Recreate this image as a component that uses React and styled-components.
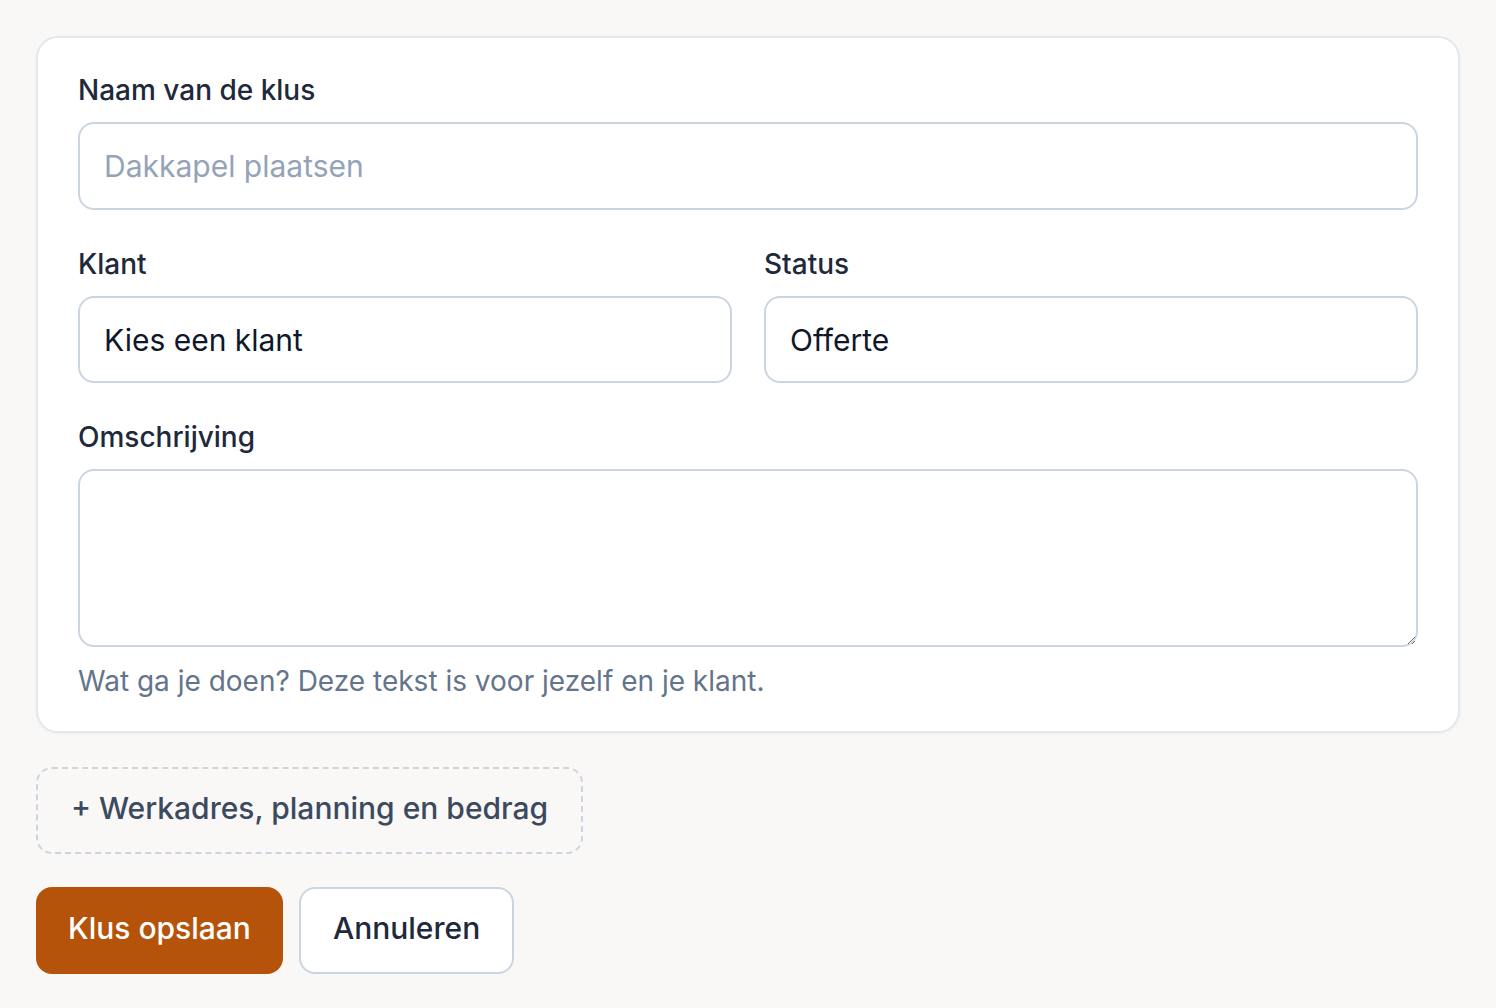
import React from "react";
import styled, { createGlobalStyle } from "styled-components";

const colors = {
  page: "#faf8f6",
  card: "#ffffff",
  cardBorder: "#e2e8f0",
  field: "#cbd5e1",
  label: "#1e293b",
  text: "#0f172a",
  placeholder: "#94a3b8",
  hint: "#64748b",
  muted: "#3b4a5f",
  primary: "#b45309",
};

const GlobalStyle = createGlobalStyle`
  * { box-sizing: border-box; }
  body {
    margin: 0;
    background: ${colors.page};
    font-family: "Inter", "Noto Sans", sans-serif;
  }
`;

export default function App() {
  return (
    <>
      <GlobalStyle />
      <Page>
        <Card>
          <Field>
            <Label htmlFor="naam">Naam van de klus</Label>
            <Input id="naam" placeholder="Dakkapel plaatsen" />
          </Field>
          <Row>
            <Field>
              <Label htmlFor="klant">Klant</Label>
              <Select id="klant" defaultValue="">
                <option value="">Kies een klant</option>
              </Select>
            </Field>
            <Field>
              <Label htmlFor="status">Status</Label>
              <Select id="status" defaultValue="offerte">
                <option value="offerte">Offerte</option>
                <option value="gepland">Gepland</option>
                <option value="bezig">Bezig</option>
                <option value="klaar">Klaar</option>
              </Select>
            </Field>
          </Row>
          <Field>
            <Label htmlFor="omschrijving">Omschrijving</Label>
            <TextArea id="omschrijving" />
            <Hint>Wat ga je doen? Deze tekst is voor jezelf en je klant.</Hint>
          </Field>
        </Card>
        <MoreButton type="button">+ Werkadres, planning en bedrag</MoreButton>
        <Actions>
          <Button primary type="button">Klus opslaan</Button>
          <Button type="button">Annuleren</Button>
        </Actions>
      </Page>
    </>
  );
}

const Page = styled.div`
  padding: 36px;
  display: flex;
  flex-direction: column;
  align-items: flex-start;
`;

const Card = styled.div`
  width: 100%;
  background: ${colors.card};
  border: 2px solid ${colors.cardBorder};
  border-radius: 22px;
  box-shadow: 0 1px 3px rgba(15, 23, 42, 0.04);
  padding: 32px 40px 30px;
  display: flex;
  flex-direction: column;
  gap: 34px;
`;

const Row = styled.div`
  display: grid;
  grid-template-columns: 1fr 1fr;
  gap: 32px;
`;

const Field = styled.div`
  display: flex;
  flex-direction: column;
  min-width: 0;
`;

const Label = styled.label`
  font-size: 28px;
  line-height: 40px;
  font-weight: 500;
  color: ${colors.label};
  margin-bottom: 12px;
`;

const fieldBase = `
  width: 100%;
  font-family: inherit;
  font-size: 30px;
  line-height: 36px;
  color: ${colors.text};
  background: #fff;
  border: 2px solid ${colors.field};
  border-radius: 16px;
  padding: 24px 24px;
  outline: none;
`;

const Input = styled.input`
  ${fieldBase}
  height: 88px;
  &::placeholder {
    color: ${colors.placeholder};
  }
`;

const Select = styled.select`
  ${fieldBase}
  height: 87px;
  padding: 0 24px;
  appearance: none;
  -webkit-appearance: none;
`;

const TextArea = styled.textarea`
  ${fieldBase}
  height: 178px;
  resize: vertical;
`;

const Hint = styled.p`
  margin: 14px 0 0;
  font-size: 28px;
  line-height: 40px;
  color: ${colors.hint};
`;

const MoreButton = styled.button`
  margin-top: 34px;
  height: 87px;
  padding: 0 33px 5px;
  background: transparent;
  border: 2px dashed ${colors.field};
  border-radius: 16px;
  font-family: inherit;
  font-size: 30px;
  font-weight: 500;
  color: ${colors.muted};
  cursor: pointer;
`;

const Actions = styled.div`
  margin-top: 33px;
  display: flex;
  gap: 16px;
`;

const Button = styled.button`
  height: 87px;
  padding: 0 32px 5px;
  border-radius: 16px;
  font-family: inherit;
  font-size: 30px;
  font-weight: 500;
  cursor: pointer;
  background: ${(p) => (p.primary ? colors.primary : "#fff")};
  color: ${(p) => (p.primary ? "#fff" : colors.label)};
  border: ${(p) => (p.primary ? "none" : `2px solid ${colors.field}`)};
`;
